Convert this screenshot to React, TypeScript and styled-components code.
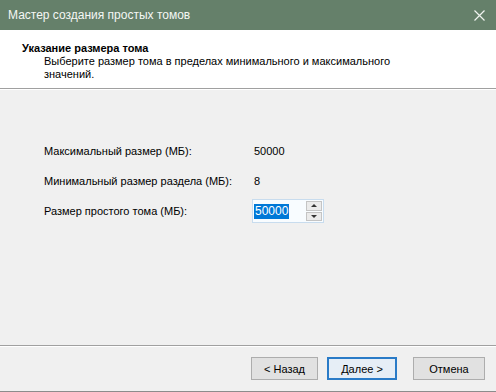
import React from 'react';
import styled, { createGlobalStyle } from 'styled-components';

const GlobalStyle = createGlobalStyle`
  html, body {
    margin: 0;
    padding: 0;
    background: #f0f0f0;
  }
  body {
    font-family: "Liberation Sans", Arial, sans-serif;
    font-size: 11px;
    color: #000;
  }
`;

const Window = styled.div`
  width: 496px;
  height: 392px;
  display: flex;
  flex-direction: column;
  background: #f0f0f0;
  overflow: hidden;
`;

const TitleBar = styled.div`
  height: 30px;
  flex: none;
  display: flex;
  align-items: center;
  justify-content: space-between;
  padding: 0 10px 0 8px;
  background: #65806a;
  color: #f4f7f4;
  font-size: 12px;
`;

const CloseGlyph = styled.svg`
  width: 11px;
  height: 11px;
  margin-right: 1px;
`;

const Header = styled.div`
  height: 59px;
  flex: none;
  box-sizing: border-box;
  padding: 11px 0 0 22px;
  background: #fff;
  border-bottom: 1px solid #a0a0a0;
  box-shadow: 0 1px 0 #fff;
`;

const HeaderTitle = styled.div`
  font-weight: bold;
  font-size: 11px;
  line-height: 14px;
`;

const HeaderText = styled.div`
  margin-left: 22px;
  width: 360px;
  line-height: 13px;
`;

const Body = styled.div`
  flex: 1;
  padding: 47px 0 0 44px;
  display: grid;
  grid-template-columns: 209px auto;
  grid-auto-rows: 30px;
  align-content: start;
  align-items: center;
`;

const Value = styled.div`
  padding-left: 1px;
`;

const SpinBox = styled.div`
  display: flex;
  align-items: stretch;
  width: 72px;
  height: 24px;
  box-sizing: border-box;
  border: 1px solid #c8dcee;
  background: #f8fcff;
  margin-left: -1px;
`;

const SpinInput = styled.div`
  flex: 1;
  display: flex;
  align-items: center;
  padding-left: 1px;
  font-size: 12px;
`;

const Selected = styled.span`
  background: #0078d7;
  color: #fff;
  line-height: 15px;
  padding: 0 1px;
`;

const SpinButtons = styled.div`
  width: 16px;
  display: flex;
  flex-direction: column;
  gap: 1px;
  margin: 1px 1px 1px 0;
`;

const SpinButton = styled.div`
  flex: 1;
  display: flex;
  align-items: center;
  justify-content: center;
  background: #ebebeb;
  border: 1px solid #c4c4c4;
`;

const Arrow = styled.div<{ $up?: boolean }>`
  width: 0;
  height: 0;
  border-left: 3px solid transparent;
  border-right: 3px solid transparent;
  ${p => (p.$up ? 'border-bottom: 3px solid #333;' : 'border-top: 3px solid #333;')}
`;

const Footer = styled.div`
  height: 47px;
  flex: none;
  box-sizing: border-box;
  border-top: 1px solid #a0a0a0;
  box-shadow: inset 0 1px 0 #fff;
  border-bottom: 1px solid #8c8c8c;
  display: flex;
  justify-content: flex-end;
  align-items: flex-start;
  padding: 11px 11px 0 0;
  gap: 16px;
`;

const ButtonPair = styled.div`
  display: flex;
  gap: 9px;
`;

const Button = styled.div<{ $focused?: boolean; $w: number }>`
  width: ${p => p.$w}px;
  height: 23px;
  box-sizing: border-box;
  display: flex;
  align-items: center;
  justify-content: center;
  background: ${p => (p.$focused ? '#e6eef6' : '#e1e1e1')};
  border: ${p => (p.$focused ? '2px solid #2a7bc7' : '1px solid #adadad')};
  font-size: 11px;
`;

export default function App() {
  return (
    <>
      <GlobalStyle />
      <Window>
        <TitleBar>
          <span>Мастер создания простых томов</span>
          <CloseGlyph viewBox="0 0 11 11">
            <path d="M0.5 0.5 L10.5 10.5 M10.5 0.5 L0.5 10.5" stroke="#f0f4f0" strokeWidth="1.2" />
          </CloseGlyph>
        </TitleBar>
        <Header>
          <HeaderTitle>Указание размера тома</HeaderTitle>
          <HeaderText>
            Выберите размер тома в пределах минимального и максимального значений.
          </HeaderText>
        </Header>
        <Body>
          <div>Максимальный размер (МБ):</div>
          <Value>50000</Value>
          <div>Минимальный размер раздела (МБ):</div>
          <Value>8</Value>
          <div>Размер простого тома (МБ):</div>
          <SpinBox>
            <SpinInput>
              <Selected>50000</Selected>
            </SpinInput>
            <SpinButtons>
              <SpinButton>
                <Arrow $up />
              </SpinButton>
              <SpinButton>
                <Arrow />
              </SpinButton>
            </SpinButtons>
          </SpinBox>
        </Body>
        <Footer>
          <ButtonPair>
            <Button $w={67}>&lt; Назад</Button>
            <Button $w={70} $focused>Далее &gt;</Button>
          </ButtonPair>
          <Button $w={72}>Отмена</Button>
        </Footer>
      </Window>
    </>
  );
}
